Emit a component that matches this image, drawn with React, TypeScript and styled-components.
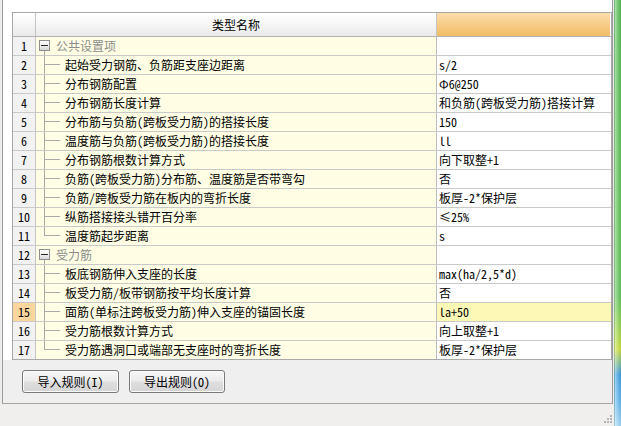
import React from 'react';
import styled, { createGlobalStyle, css } from 'styled-components';

const FONT = `"Noto Sans Mono CJK SC", "Noto Sans CJK SC", sans-serif`;

const GlobalStyle = createGlobalStyle`
  html, body { margin: 0; padding: 0; }
  body {
    width: 621px;
    height: 426px;
    overflow: hidden;
    background: #ebebeb;
    font-family: ${FONT};
    font-size: 12px;
    color: #000;
  }
`;

type Row =
  | { kind: 'group'; no: number; name: string }
  | { kind: 'item'; no: number; name: string; value: string; last?: boolean; active?: boolean };

const rows: Row[] = [
  { kind: 'group', no: 1, name: '公共设置项' },
  { kind: 'item', no: 2, name: '起始受力钢筋、负筋距支座边距离', value: 's/2' },
  { kind: 'item', no: 3, name: '分布钢筋配置', value: 'Φ6@250' },
  { kind: 'item', no: 4, name: '分布钢筋长度计算', value: '和负筋(跨板受力筋)搭接计算' },
  { kind: 'item', no: 5, name: '分布筋与负筋(跨板受力筋)的搭接长度', value: '150' },
  { kind: 'item', no: 6, name: '温度筋与负筋(跨板受力筋)的搭接长度', value: 'll' },
  { kind: 'item', no: 7, name: '分布钢筋根数计算方式', value: '向下取整+1' },
  { kind: 'item', no: 8, name: '负筋(跨板受力筋)分布筋、温度筋是否带弯勾', value: '否' },
  { kind: 'item', no: 9, name: '负筋/跨板受力筋在板内的弯折长度', value: '板厚-2*保护层' },
  { kind: 'item', no: 10, name: '纵筋搭接接头错开百分率', value: '≤25%' },
  { kind: 'item', no: 11, name: '温度筋起步距离', value: 's', last: true },
  { kind: 'group', no: 12, name: '受力筋' },
  { kind: 'item', no: 13, name: '板底钢筋伸入支座的长度', value: 'max(ha/2,5*d)' },
  { kind: 'item', no: 14, name: '板受力筋/板带钢筋按平均长度计算', value: '否' },
  { kind: 'item', no: 15, name: '面筋(单标注跨板受力筋)伸入支座的锚固长度', value: 'la+50', active: true },
  { kind: 'item', no: 16, name: '受力筋根数计算方式', value: '向上取整+1' },
  { kind: 'item', no: 17, name: '受力筋遇洞口或端部无支座时的弯折长度', value: '板厚-2*保护层', last: true },
];

const Screen = styled.div`
  display: flex;
  width: 621px;
  height: 426px;
`;

const Window = styled.div`
  display: flex;
  flex-direction: column;
  width: 614px;
  height: 426px;
  background: #ececec;
`;

const Frame = styled.div`
  display: flex;
  flex-direction: column;
  margin: 0 1px 0 2px;
  border-left: 1px solid #9a9a9a;
  border-right: 1px solid #9a9a9a;
  border-bottom: 1px solid #a4a4a4;
`;

const TablePanel = styled.div`
  background: #ffffff;
  padding: 12px 0 0 9px;
`;

const Grid = styled.div`
  width: 600px;
  box-sizing: border-box;
  border: 1px solid #a9a9a9;
  display: flex;
  flex-direction: column;
`;

const rowCols = css`
  display: grid;
  grid-template-columns: 23px 401px 174px;
`;

const HeaderRow = styled.div`
  ${rowCols};
  height: 24px;
  box-sizing: border-box;
  border-bottom: 1px solid #b3b3b3;
`;

const HeaderCell = styled.div<{ $accent?: boolean }>`
  display: flex;
  align-items: center;
  justify-content: center;
  box-sizing: border-box;
  border-right: ${(p) => (p.$accent ? '1px solid #ffffff' : '1px solid #c4c4c4')};
  background: ${(p) =>
    p.$accent
      ? 'linear-gradient(to bottom, #fbdcaa 0%, #f7cd88 50%, #f0bd66 100%)'
      : 'linear-gradient(to bottom, #ffffff 0%, #f6f6f6 50%, #e9e9e9 100%)'};
  font-size: 12px;
  line-height: 23px;
  color: #000;
`;

const DataRow = styled.div<{ $last?: boolean }>`
  ${rowCols};
  height: ${(p) => (p.$last ? '18px' : '19px')};
  box-sizing: border-box;
  border-bottom: ${(p) => (p.$last ? 'none' : '1px solid #c9c9c9')};
`;

const NumCell = styled.div<{ $active?: boolean }>`
  display: flex;
  align-items: center;
  justify-content: center;
  box-sizing: border-box;
  border-right: 1px solid #c4c4c4;
  background: ${(p) => (p.$active ? '#fcd79d' : '#f2f2f2')};
  font-size: 12px;
  line-height: 18px;
`;

const NameCell = styled.div`
  display: flex;
  align-items: stretch;
  box-sizing: border-box;
  border-right: 1px solid #bdbdbd;
  background: #fffee4;
  overflow: hidden;
  white-space: nowrap;
`;

const ValueCell = styled.div<{ $active?: boolean }>`
  display: flex;
  align-items: center;
  box-sizing: border-box;
  padding-left: 2px;
  background: ${(p) => (p.$active ? '#fdf8b6' : '#ffffff')};
  font-size: 12px;
  line-height: 18px;
  white-space: nowrap;
  overflow: hidden;
`;

const Toggle = styled.span`
  position: relative;
  align-self: flex-start;
  flex: 0 0 auto;
  width: 9px;
  height: 9px;
  margin: 3px 6px 0 3px;
  border: 1px solid #8f8f8f;
  background: linear-gradient(to bottom, #ffffff 0%, #ececec 60%, #d6d6d6 100%);
  &::before {
    content: '';
    position: absolute;
    left: 1px;
    top: 4px;
    width: 7px;
    height: 1px;
    background: #262626;
  }
  &::after {
    content: '';
    position: absolute;
    left: 4px;
    top: calc(100% + 1px);
    width: 1px;
    height: 4px;
    background: #a9a9a9;
  }
`;

const Connector = styled.span<{ $last?: boolean }>`
  position: relative;
  flex: 0 0 29px;
  &::before {
    content: '';
    position: absolute;
    left: 8px;
    top: 0;
    width: 1px;
    height: ${(p) => (p.$last ? '9px' : '100%')};
    background: #a9a9a9;
  }
  &::after {
    content: '';
    position: absolute;
    left: 9px;
    top: 8px;
    width: 15px;
    height: 1px;
    background: #a9a9a9;
  }
`;

const Label = styled.span<{ $group?: boolean }>`
  align-self: center;
  font-size: 12px;
  line-height: 18px;
  color: ${(p) => (p.$group ? '#8d8d8d' : '#000000')};
`;

const ButtonBar = styled.div`
  display: flex;
  gap: 10px;
  height: 43px;
  box-sizing: border-box;
  padding: 10px 0 0 19px;
  background: #efefef;
`;

const Button = styled.button<{ $w: number }>`
  width: ${(p) => p.$w}px;
  height: 23px;
  padding: 0;
  border: 1px solid #7a7a7a;
  border-radius: 3px;
  background: linear-gradient(to bottom, #f6f6f6 0%, #ececec 48%, #dfdfdf 52%, #d4d4d4 100%);
  box-shadow: inset 0 0 0 1px #fbfbfb;
  font-family: ${FONT};
  font-size: 12px;
  color: #000;
  line-height: 21px;
`;

const StatusBar = styled.div`
  flex: 1;
  display: flex;
  justify-content: flex-end;
  align-items: flex-end;
  background: #f0efee;
  padding: 0 1px 2px 0;
`;

const Grip = styled.svg`
  display: block;
`;

const SideStrip = styled.div`
  width: 7px;
  height: 426px;
  background:
    linear-gradient(to right, rgba(0, 60, 0, 0.35) 0px, rgba(255, 255, 255, 0.55) 1px, rgba(255, 255, 255, 0.25) 3px, rgba(0, 0, 0, 0.05) 7px),
    linear-gradient(to bottom, #55bb55 0%, #62c45a 70%, #a8d848 79%, #c9dd3c 82%, #3d9ee0 88%, #5fb4ea 94%, #9fd4f2 100%);
`;

export default function App() {
  return (
    <>
      <GlobalStyle />
      <Screen>
        <Window>
          <Frame>
            <TablePanel>
              <Grid>
                <HeaderRow>
                  <HeaderCell />
                  <HeaderCell>类型名称</HeaderCell>
                  <HeaderCell $accent />
                </HeaderRow>
                {rows.map((r, i) => {
                  const isLast = i === rows.length - 1;
                  if (r.kind === 'group') {
                    return (
                      <DataRow key={r.no} $last={isLast}>
                        <NumCell>{r.no}</NumCell>
                        <NameCell>
                          <Toggle />
                          <Label $group>{r.name}</Label>
                        </NameCell>
                        <ValueCell />
                      </DataRow>
                    );
                  }
                  return (
                    <DataRow key={r.no} $last={isLast}>
                      <NumCell $active={r.active}>{r.no}</NumCell>
                      <NameCell>
                        <Connector $last={r.last} />
                        <Label>{r.name}</Label>
                      </NameCell>
                      <ValueCell $active={r.active}>{r.value}</ValueCell>
                    </DataRow>
                  );
                })}
              </Grid>
            </TablePanel>
            <ButtonBar>
              <Button $w={97}>导入规则(I)</Button>
              <Button $w={96}>导出规则(O)</Button>
            </ButtonBar>
          </Frame>
          <StatusBar>
            <Grip width="10" height="10" viewBox="0 0 10 10">
              <g fill="#b4b4b4">
                <rect x="7" y="1" width="2" height="2" />
                <rect x="4" y="4" width="2" height="2" />
                <rect x="7" y="4" width="2" height="2" />
                <rect x="1" y="7" width="2" height="2" />
                <rect x="4" y="7" width="2" height="2" />
                <rect x="7" y="7" width="2" height="2" />
              </g>
            </Grip>
          </StatusBar>
        </Window>
        <SideStrip />
      </Screen>
    </>
  );
}
